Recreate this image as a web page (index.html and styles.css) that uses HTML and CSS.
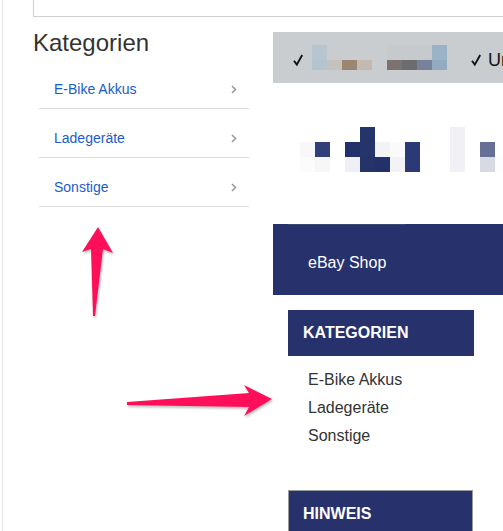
FILE: index.html
```html
<!DOCTYPE html>
<html lang="de">
<head>
<meta charset="utf-8">
<title>Kategorien</title>
<link rel="stylesheet" href="styles.css">
</head>
<body>
<div class="frame">
  <div class="topbox"></div>
  <div class="columns">
    <aside class="left">
      <h2 class="left-title">Kategorien</h2>
      <ul class="cat-list">
        <li class="cat-item"><a class="cat-link" href="#">E-Bike Akkus</a><svg class="chev" width="6" height="9" viewBox="0 0 6 9"><path d="M1 1l3.5 3.5L1 8" fill="none" stroke="#9a9a9a" stroke-width="1.6"/></svg></li>
        <li class="cat-item"><a class="cat-link" href="#">Ladegeräte</a><svg class="chev" width="6" height="9" viewBox="0 0 6 9"><path d="M1 1l3.5 3.5L1 8" fill="none" stroke="#9a9a9a" stroke-width="1.6"/></svg></li>
        <li class="cat-item"><a class="cat-link" href="#">Sonstige</a><svg class="chev" width="6" height="9" viewBox="0 0 6 9"><path d="M1 1l3.5 3.5L1 8" fill="none" stroke="#9a9a9a" stroke-width="1.6"/></svg></li>
      </ul>
    </aside>
    <main class="right">
      <div class="usp-bar">
        <svg class="check" width="10" height="12" viewBox="0 0 10 12"><path d="M1 6.8 L3.8 10.6 L9.2 1" fill="none" stroke="#111" stroke-width="1.9" stroke-linejoin="miter"/></svg>
        <svg class="blur-usp" width="135" height="25" viewBox="0 0 135 25">
          <rect x="0" y="0" width="15" height="15" fill="#b6c5cf"/>
          <rect x="75" y="0" width="45" height="15" fill="#c6cacd"/>
          <rect x="120" y="0" width="15" height="15" fill="#9ab3c6"/>
          <rect x="0" y="15" width="15" height="10" fill="#b4c4ce"/>
          <rect x="15" y="15" width="15" height="10" fill="#c4c2bd"/>
          <rect x="30" y="15" width="15" height="10" fill="#9b8672"/>
          <rect x="45" y="15" width="15" height="10" fill="#c4b9b0"/>
          <rect x="75" y="15" width="15" height="10" fill="#7e7270"/>
          <rect x="90" y="15" width="15" height="10" fill="#6c6c6e"/>
          <rect x="105" y="15" width="15" height="10" fill="#76829b"/>
          <rect x="120" y="15" width="15" height="10" fill="#93aac0"/>
        </svg>
        <svg class="check check-second" width="10" height="12" viewBox="0 0 10 12"><path d="M1 6.8 L3.8 10.6 L9.2 1" fill="none" stroke="#111" stroke-width="1.9" stroke-linejoin="miter"/></svg>
        <span class="usp-text">Un</span>
      </div>
      <div class="logo-area">
        <svg class="logo-blur" width="210" height="45" viewBox="0 0 210 45">
          <rect x="60" y="0" width="15" height="15" fill="#25356b"/>
          <rect x="150" y="0" width="15" height="15" fill="#f0f0f5"/>
          <rect x="0" y="15" width="15" height="15" fill="#f8f8fa"/>
          <rect x="15" y="15" width="15" height="15" fill="#31407a"/>
          <rect x="45" y="15" width="15" height="15" fill="#22306b"/>
          <rect x="60" y="15" width="15" height="15" fill="#25356b"/>
          <rect x="75" y="15" width="15" height="15" fill="#f2f3f5"/>
          <rect x="90" y="15" width="15" height="15" fill="#fafafa"/>
          <rect x="105" y="15" width="15" height="15" fill="#2b3a77"/>
          <rect x="150" y="15" width="15" height="15" fill="#f0f0f5"/>
          <rect x="180" y="15" width="15" height="15" fill="#666f96"/>
          <rect x="0" y="30" width="15" height="15" fill="#fcfcfc"/>
          <rect x="15" y="30" width="15" height="15" fill="#f7f7f7"/>
          <rect x="45" y="30" width="15" height="15" fill="#eef0f5"/>
          <rect x="60" y="30" width="15" height="15" fill="#243469"/>
          <rect x="75" y="30" width="15" height="15" fill="#22306b"/>
          <rect x="90" y="30" width="15" height="15" fill="#f3f3f5"/>
          <rect x="105" y="30" width="15" height="15" fill="#2b3a77"/>
          <rect x="150" y="30" width="15" height="15" fill="#f0f0f5"/>
          <rect x="180" y="30" width="15" height="15" fill="#d8dae3"/>
          <rect x="195" y="30" width="15" height="15" fill="#fdfdfd"/>
        </svg>
      </div>
      <div class="shop-bar"><span class="shop-line"></span>eBay Shop</div>
      <div class="box-head">KATEGORIEN</div>
      <ul class="shop-cats">
        <li>E-Bike Akkus</li>
        <li>Ladegeräte</li>
        <li>Sonstige</li>
      </ul>
      <div class="box-head box-head--bordered">HINWEIS</div>
    </main>
  </div>
  <svg class="arrows" width="503" height="531" viewBox="0 0 503 531">
    <polygon points="98,227 113,253 103,249 95,316 93,316 91,249 82,252" fill="#ff0f5a"/>
    <polygon points="127,402 249,393 244,385 272,399 244,416 249,407 127,405" fill="#ff0f5a"/>
  </svg>
</div>
</body>
</html>
```
FILE: styles.css
```css
* { box-sizing: border-box; }
html, body { margin: 0; padding: 0; background: #fff; }
body {
  width: 503px;
  height: 531px;
  overflow: hidden;
  font-family: "Liberation Sans", Arial, "DejaVu Sans", sans-serif;
  color: #333;
}
.frame {
  position: relative;
  margin-left: 2px;
  border-left: 1px solid #e6e6e6;
  height: 531px;
}
.topbox {
  margin-left: 30px;
  height: 17px;
  border-left: 1px solid #cfcfcf;
  border-bottom: 1px solid #cfcfcf;
}
.columns {
  display: flex;
  padding-left: 30px;
  gap: 24px;
}
.left { width: 216px; flex: none; }
.left-title {
  margin: 12px 0 3px;
  font-size: 24px;
  line-height: 28px;
  font-weight: normal;
  color: #333;
}
.cat-list { list-style: none; margin: 0 0 0 6px; padding: 0; }
.cat-item {
  display: flex;
  align-items: center;
  justify-content: space-between;
  padding: 19px 12px 9px 15px;
  border-bottom: 1px solid #dcdcdc;
}
.cat-link {
  font-size: 14px;
  line-height: 20px;
  color: #1a5ccc;
  text-decoration: none;
}
.chev { display: block; }
.right {
  width: 230px;
  flex: none;
  overflow: hidden;
}
.usp-bar {
  margin-top: 15px;
  height: 51px;
  background: #cacdd0;
  display: flex;
  align-items: center;
  padding-left: 20px;
  white-space: nowrap;
  color: #111;
}
.check { display: block; flex: none; margin-top: 4px; }
.blur-usp { display: block; margin-left: 9px; flex: none; }
.check-second { margin-left: 24px; }
.usp-text {
  margin-left: 7px;
  font-size: 18px;
  line-height: 20px;
  margin-top: 4px;
}
.logo-area {
  padding: 44px 0 0 27px;
  height: 141px;
}
.logo-blur { display: block; }
.shop-bar {
  position: relative;
  height: 71px;
  background: #27316c;
  color: #fff;
  font-size: 16px;
  line-height: 20px;
  padding: 29px 0 0 35px;
}
.shop-line {
  position: absolute;
  top: 0;
  left: 15px;
  width: 117px;
  height: 1px;
  background: #3d4679;
}
.box-head {
  margin: 15px 0 0 15px;
  width: 186px;
  height: 46px;
  background: #27316c;
  color: #fff;
  font-weight: bold;
  font-size: 16px;
  line-height: 20px;
  padding: 13px 0 0 15px;
}
.box-head--bordered {
  margin-top: 40px;
  width: 185px;
  border: 1px solid #9a9a9a;
  border-bottom: none;
  padding-left: 14px;
}
.shop-cats {
  list-style: none;
  margin: 10px 0 0 35px;
  padding: 0;
  font-size: 16px;
  line-height: 28px;
  color: #333;
}
.arrows {
  position: absolute;
  left: -3px;
  top: 0;
  pointer-events: none;
  filter: drop-shadow(1px 2px 1px rgba(0,0,0,0.25));
}
```
